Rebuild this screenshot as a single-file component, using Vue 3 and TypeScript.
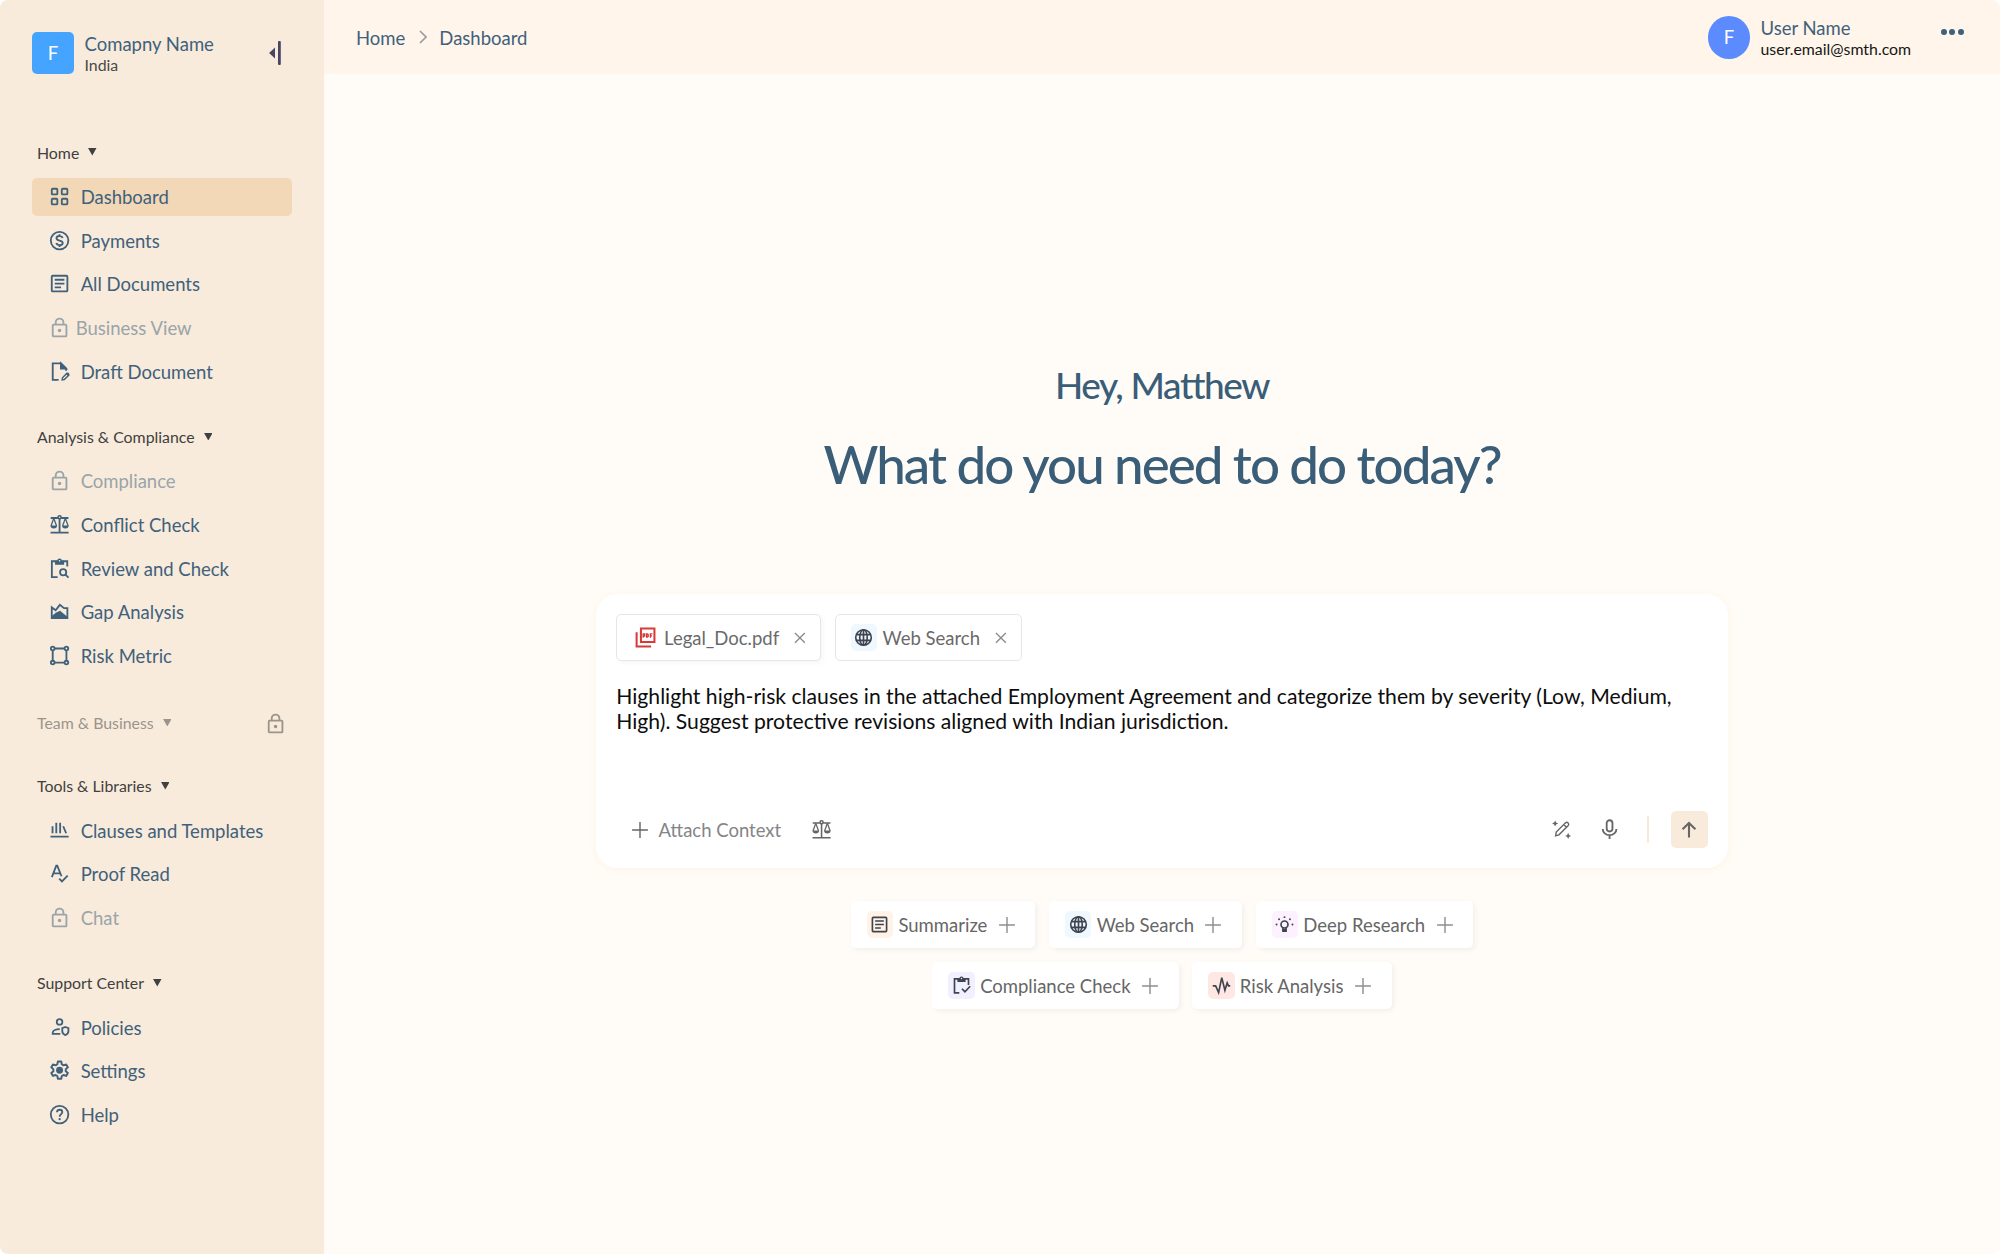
<script setup lang="ts">
interface NavItem {
  label: string
  icon: string
  active?: boolean
  locked?: boolean
  tight?: boolean
}
interface NavSection {
  title: string
  locked?: boolean
  items: NavItem[]
}
interface Suggestion {
  label: string
  icon: string
  tint: string
}

const icons: Record<string, string> = {
  grid: '<rect x="3.9" y="3.9" width="5.8" height="5.8" rx="1"/><rect x="14.3" y="3.9" width="5.8" height="5.8" rx="1"/><rect x="3.9" y="14.3" width="5.8" height="5.8" rx="1"/><rect x="14.3" y="14.3" width="5.8" height="5.8" rx="1"/>',
  dollar: '<circle cx="12" cy="12" r="9.1"/><path d="M15.3 9.3c-.5-1.3-1.7-2-3.3-2-1.9 0-3.2.9-3.2 2.3 0 1.5 1.3 2 3.2 2.4 2 .5 3.3 1 3.3 2.5s-1.4 2.300-3.300 2.300c-1.800 0-3-.8-3.400-2.200M12 5.400v2M12 16.700v2"/>',
  article: '<rect x="3.9" y="3.9" width="16.2" height="16.2" rx="1"/><path d="M7 8h10M7 12h10M7 16h6.500"/>',
  lock: '<rect x="4.9" y="9" width="14.200" height="12.200" rx=".8"/><path d="M8 9V6.700a4 4 0 0 1 8 0V9"/><circle cx="12" cy="15" r="1.800" fill="currentColor" stroke="none"/>',
  draft: '<path d="M11 20.700H4.900V3.500h8.500l5.300 5.300v2.400"/><path d="M13.400 3.500v5.300h5.300z" fill="currentColor"/><path d="m14.700 20.700.3-2.300 4.600-4.600 1.900 1.900-4.600 4.600z" stroke-width="1.500"/><path d="m18.700 14.700 1.900-1.900 1.900 1.900-1.900 1.900z" fill="currentColor" stroke="none"/>',
  scales: '<circle cx="12" cy="4.500" r="1.600" stroke-width="1.600"/><path d="M2.800 5.200h7.500M13.700 5.200h7.500M12 6v14.200M2.600 20.400h18.800"/><path d="m6 5.400-2.900 8M6 5.400l2.900 8M18 5.400l-2.900 8M18 5.400l2.900 8" stroke-width="1.300"/><path d="M2.600 13h6.800a3.400 3.100 0 0 1-6.800 0zM14.600 13h6.800a3.400 3.100 0 0 1-6.800 0z" fill="currentColor" stroke="none"/>',
  review: '<path d="M10 20.900H4V4.400h16v5.400"/><path d="M7.300 4h2.300a2.400 2.400 0 0 1 4.800 0h2.300v4H7.300z" fill="currentColor" stroke="none"/><circle cx="12" cy="4" r=".8" fill="#f8ebdb" stroke="none"/><circle cx="15.700" cy="15.800" r="3.200"/><path d="m18.100 18.200 3.200 3.200"/>',
  gap: '<path d="M3.900 18.700V7.700l4 3 4.400-5.700 4.300 3.400h3.500v10.300z"/><path d="M4 16.500 8.500 13l4-1.800 7.600 6.300v1.200H4z" fill="currentColor" stroke="none"/>',
  metric: '<circle cx="4.900" cy="4.700" r="1.900"/><circle cx="19.100" cy="4.700" r="1.900"/><circle cx="4.900" cy="19.300" r="1.900"/><circle cx="19.100" cy="19.300" r="1.900"/><path d="M6.800 4.700h10.400M6.800 19.300h10.400M4.900 6.600v10.800M19.100 6.600v10.800"/>',
  books: '<path d="M4.700 7.500v7.300M8.600 4v10.800M12.600 4v10.800M15.800 7.500l3 7.300M2.600 18.200h18.800"/>',
  proof: '<path d="M4 15.600 8.600 3.900h1L14 14.800M5.600 11.800h7.200M11.600 17.200l2.900 2.900 5.900-6"/>',
  policy: '<circle cx="12" cy="6.100" r="2.900"/><path d="M12.800 18.600H4.900v-1.300c0-2.500 3.400-3.700 7.300-3.700"/><path d="m18 11.400 3.200 1.200v3c0 2.100-1.300 3.500-3.200 4.200-1.900-.7-3.200-2.100-3.200-4.200v-3z"/>',
  gear: '<path d="M10.300 3h3.400l.5 2.700 1.700 1 2.600-.9 1.700 2.900-2.100 1.800v2l2.100 1.800-1.700 2.900-2.600-.9-1.700 1-.5 2.700h-3.400l-.5-2.700-1.700-1-2.600.9-1.700-2.900 2.100-1.800v-2L3.800 8.700l1.700-2.900 2.600.9 1.700-1z" stroke-linejoin="round" transform="translate(-.6 -.5) scale(1.050)"/><circle cx="12" cy="11.700" r="3.600" fill="currentColor" stroke="none"/>',
  help: '<circle cx="12" cy="12" r="9.100"/><path d="M9.300 9.700c0-1.600 1.200-2.700 2.800-2.700s2.700 1 2.700 2.500c0 2-2.700 2.200-2.700 4.700"/><circle cx="12.100" cy="16.800" r="1.200" fill="currentColor" stroke="none"/>',
  pdf: '<path d="M7.200 2.500h14v14.200h-14zM2.700 6.600v14.700h15" stroke-width="2.100"/><path d="M9.500 12.300V8.100h1.600v2.300H9.500M13.100 8.100v3.500h.8l.8-.7V8.800l-.8-.7zM17 12.300V8.100h2.100M17 10.200h1.700" stroke-width="1.400"/>',
  globe: '<circle cx="12" cy="12" r="8.900"/><ellipse cx="12" cy="12" rx="4.300" ry="8.900"/><path d="M12 3v18M3.600 8.800h16.800M3.600 15.200h16.800"/>',
  bulb: '<circle cx="12" cy="12" r="4"/><path d="M10.200 15.700v3.800h3.600v-3.800M10.200 18h3.600"/><g fill="currentColor" stroke="none"><circle cx="12" cy="3.600" r="1.100"/><circle cx="5.800" cy="5.900" r="1.100"/><circle cx="18.200" cy="5.900" r="1.100"/><circle cx="2.900" cy="12" r="1.100"/><circle cx="21.100" cy="12" r="1.100"/></g>',
  check: '<path d="M9.500 20.500H4V4.500h16v6.800"/><path d="M7.300 4h2.300a2.400 2.400 0 0 1 4.800 0h2.300v4H7.300z" fill="currentColor" stroke="none"/><circle cx="12" cy="4" r=".8" fill="#f2efff" stroke="none"/><path d="m12.500 15.700 3.400 3.400 6-6.200"/>',
  pulse: '<path d="M2 12.500h3.300L8.700 20l3.600-17 3.600 14.500L18.500 9l1.500 3.500h2"/>',
  plus: '<path d="M12 2.500v19M2.500 12h19"/>',
  close: '<path d="m4.500 4.500 15 15M19.500 4.500l-15 15"/>',
  pen: '<path d="m5.300 19.200.7-4.200L16.600 4.400a2.200 2.200 0 0 1 3.100 3.100L9.100 18.100zM14.600 6.400l3.100 3.100"/><path d="M4.700 1.600 5.800 4l2.400 1.100-2.400 1.100-1.100 2.400-1.100-2.400-2.400-1.100L3.600 4zM19.600 15.800l1.100 2.400 2.400 1.100-2.400 1.100-1.100 2.400-1.100-2.400-2.400-1.100 2.400-1.100z" fill="currentColor" stroke="none"/>',
  mic: '<rect x="9" y="2.300" width="6" height="11.700" rx="3"/><path d="M4.900 11.300a7.100 6.500 0 0 0 14.200 0M12 17.800v4"/>',
  up: '<path d="M12 21V3.500M4.300 11.200 12 3.500l7.700 7.700"/>',
}

const sections: NavSection[] = [
  {
    title: 'Home',
    items: [
      { label: 'Dashboard', icon: 'grid', active: true },
      { label: 'Payments', icon: 'dollar' },
      { label: 'All Documents', icon: 'article' },
      { label: 'Business View', icon: 'lock', locked: true, tight: true },
      { label: 'Draft Document', icon: 'draft' },
    ],
  },
  {
    title: 'Analysis & Compliance',
    items: [
      { label: 'Compliance', icon: 'lock', locked: true },
      { label: 'Conflict Check', icon: 'scales' },
      { label: 'Review and Check', icon: 'review' },
      { label: 'Gap Analysis', icon: 'gap' },
      { label: 'Risk Metric', icon: 'metric' },
    ],
  },
  { title: 'Team & Business', locked: true, items: [] },
  {
    title: 'Tools & Libraries',
    items: [
      { label: 'Clauses and Templates', icon: 'books' },
      { label: 'Proof Read', icon: 'proof' },
      { label: 'Chat', icon: 'lock', locked: true },
    ],
  },
  {
    title: 'Support Center',
    items: [
      { label: 'Policies', icon: 'policy' },
      { label: 'Settings', icon: 'gear' },
      { label: 'Help', icon: 'help' },
    ],
  },
]

const suggestionRows: Suggestion[][] = [
  [
    { label: 'Summarize', icon: 'article', tint: 'peach' },
    { label: 'Web Search', icon: 'globe', tint: 'sky' },
    { label: 'Deep Research', icon: 'bulb', tint: 'pink' },
  ],
  [
    { label: 'Compliance Check', icon: 'check', tint: 'violet' },
    { label: 'Risk Analysis', icon: 'pulse', tint: 'coral' },
  ],
]
</script>

<template>
  <div class="app">
    <aside class="sidebar">
      <div class="company">
        <div class="logo">F</div>
        <div class="company-text">
          <div class="company-name">Comapny Name</div>
          <div class="company-place">India</div>
        </div>
        <svg class="collapse" viewBox="0 0 12 24">
          <path d="M6 6.600v10.800L.6 12.600a.8.8 0 0 1 0-1.200z" />
          <rect x="9" y="0" width="2.800" height="24" rx="1" />
        </svg>
      </div>
      <nav>
        <section v-for="s in sections" :key="s.title" class="section" :class="{ 'section-locked': s.locked }">
          <div class="section-title">
            <span>{{ s.title }}</span>
            <svg class="caret" viewBox="0 0 9 8"><path d="M0 0h9L4.500 8z" /></svg>
            <svg v-if="s.locked" class="icon section-lock" viewBox="0 0 24 24" v-html="icons.lock"></svg>
          </div>
          <div v-if="s.items.length" class="items">
            <div
              v-for="i in s.items"
              :key="i.label"
              class="item"
              :class="{ active: i.active, locked: i.locked, tight: i.tight }"
            >
              <svg class="icon" viewBox="0 0 24 24" v-html="icons[i.icon]"></svg>
              <span>{{ i.label }}</span>
            </div>
          </div>
        </section>
      </nav>
    </aside>

    <div class="page">
      <header class="topbar">
        <div class="crumbs">
          <span>Home</span>
          <svg class="chevron" viewBox="0 0 8 14"><path d="m1 1 6 6-6 6" /></svg>
          <span>Dashboard</span>
        </div>
        <div class="user">
          <div class="avatar">F</div>
          <div class="user-text">
            <div class="user-name">User Name</div>
            <div class="user-mail">user.email@smth.com</div>
          </div>
          <div class="dots"><i></i><i></i><i></i></div>
        </div>
      </header>

      <main class="main">
        <h2 class="greeting">Hey, Matthew</h2>
        <h1 class="question">What do you need to do today?</h1>

        <div class="composer">
          <div class="chips">
            <div class="chip chip-file">
              <svg class="icon pdf" viewBox="0 0 24 24" v-html="icons.pdf"></svg>
              <span>Legal_Doc.pdf</span>
              <svg class="icon close" viewBox="0 0 24 24" v-html="icons.close"></svg>
            </div>
            <div class="chip chip-web">
              <div class="tile sky"><svg class="icon" viewBox="0 0 24 24" v-html="icons.globe"></svg></div>
              <span>Web Search</span>
              <svg class="icon close" viewBox="0 0 24 24" v-html="icons.close"></svg>
            </div>
          </div>
          <p class="prompt">
            Highlight high-risk clauses in the attached Employment Agreement and categorize them by severity (Low, Medium, High). Suggest protective revisions aligned with Indian jurisdiction.
          </p>
          <div class="tools">
            <svg class="icon attach-plus" viewBox="0 0 24 24" v-html="icons.plus"></svg>
            <span class="attach">Attach Context</span>
            <svg class="icon law" viewBox="0 0 24 24" v-html="icons.scales"></svg>
            <div class="tools-right">
              <svg class="icon pen" viewBox="0 0 24 24" v-html="icons.pen"></svg>
              <svg class="icon mic" viewBox="0 0 24 24" v-html="icons.mic"></svg>
              <span class="divider"></span>
              <div class="send"><svg class="icon" viewBox="0 0 24 24" v-html="icons.up"></svg></div>
            </div>
          </div>
        </div>

        <div class="suggestions">
          <div v-for="(row, r) in suggestionRows" :key="r" class="suggestion-row">
            <div v-for="p in row" :key="p.label" class="suggestion">
              <div class="tile" :class="p.tint">
                <svg class="icon" viewBox="0 0 24 24" v-html="icons[p.icon]"></svg>
              </div>
              <span>{{ p.label }}</span>
              <svg class="icon add" viewBox="0 0 24 24" v-html="icons.plus"></svg>
            </div>
          </div>
        </div>
      </main>
    </div>
  </div>
</template>

<style>
body {
  background: #fff;
}
</style>

<style scoped>
.app {
  display: flex;
  width: 2000px;
  height: 1254px;
  border-radius: 8px;
  overflow: hidden;
  background: #fffcf7;
  font-family: Lato, "Open Sans", sans-serif;
  font-size: 18.5px;
  color: #3f617c;
  box-sizing: border-box;
}
.icon {
  display: block;
  flex: none;
  width: 23.15px;
  height: 23.15px;
  fill: none;
  stroke: currentColor;
  stroke-width: 1.9;
}
.sidebar {
  width: 324px;
  flex: none;
  box-sizing: border-box;
  padding: 32px 32px 0;
  background: #f8ebdb;
}
.company {
  display: flex;
  align-items: center;
  height: 42px;
  padding-right: 11px;
}
.logo {
  width: 42px;
  height: 42px;
  border-radius: 5px;
  background: #45a4ff;
  color: #fff;
  display: flex;
  align-items: center;
  justify-content: center;
}
.company-text {
  margin-left: 10.5px;
  flex: 1;
}
.company-name {
  line-height: 22px;
}
.company-place {
  font-size: 15.87px;
  line-height: 19px;
  color: #484848;
}
.collapse {
  width: 12px;
  height: 24px;
  fill: #474666;
}
nav {
  margin-top: 67px;
  display: flex;
  flex-direction: column;
  gap: 34.6px;
}
.section-title {
  display: flex;
  align-items: center;
  height: 24px;
  padding: 0 5px;
  font-size: 15.87px;
  color: #404040;
}
.section-title span {
  margin-top: -2px;
}
.caret {
  width: 8.6px;
  height: 7.5px;
  margin: -2px 0 0 9px;
  fill: currentColor;
}
.section-locked {
  margin-bottom: 2.5px;
}
.section-locked .section-title {
  height: 28px;
  color: #9b948c;
}
.section-lock {
  margin: -1px 0 0 auto;
}
.items {
  margin-top: 13px;
  display: flex;
  flex-direction: column;
  gap: 5.7px;
}
.item {
  display: flex;
  align-items: center;
  gap: 9.6px;
  height: 38px;
  padding-left: 15.9px;
  border-radius: 5px;
}
.item .icon {
  margin-top: -1px;
}
.item.active {
  background: #f2d8b7;
}
.item.locked {
  color: #9aa4a9;
}
.item.tight {
  gap: 4.7px;
}
.page {
  flex: 1;
  display: flex;
  flex-direction: column;
}
.topbar {
  height: 74px;
  box-sizing: border-box;
  padding: 16px 36.5px 0 32px;
  display: flex;
  justify-content: space-between;
  background: #fff5eb;
}
.crumbs {
  display: flex;
  align-items: center;
  height: 43px;
}
.chevron {
  width: 8px;
  height: 14px;
  margin: -1px 12.5px 0 13.5px;
  fill: none;
  stroke: #9a9a9a;
  stroke-width: 1.6;
}
.user {
  display: flex;
  height: 43px;
}
.avatar {
  width: 42.5px;
  height: 42.5px;
  border-radius: 50%;
  background: #5b8bff;
  color: #fff;
  display: flex;
  align-items: center;
  justify-content: center;
}
.user-text {
  margin-left: 10.3px;
}
.user-name {
  line-height: 24px;
}
.user-mail {
  margin-top: -1px;
  font-size: 15.87px;
  line-height: 19px;
  color: #161616;
}
.dots {
  display: flex;
  gap: 2.5px;
  margin: 13px 0 0 30px;
}
.dots i {
  width: 5.8px;
  height: 5.8px;
  border-radius: 50%;
  background: #3f617c;
}
.main {
  display: flex;
  flex-direction: column;
  align-items: center;
  color: #3a5d78;
}
.greeting,
.question {
  margin: 0;
  font-weight: 500;
  font-feature-settings: "liga" 1;
  white-space: nowrap;
}
.greeting {
  margin-top: 289px;
  font-size: 37px;
  line-height: 44px;
  letter-spacing: -1.38px;
}
.question {
  margin-top: 25px;
  font-size: 52.9px;
  line-height: 64px;
  letter-spacing: -1.98px;
}
.composer {
  width: 1131.5px;
  height: 274px;
  margin-top: 98px;
  box-sizing: border-box;
  padding: 20px;
  border-radius: 21px;
  background: #fff;
  box-shadow: 0 1px 8px rgba(248, 225, 195, .35);
  display: flex;
  flex-direction: column;
}
.chips {
  display: flex;
  gap: 14.3px;
  color: #6a6a6a;
}
.chip {
  display: flex;
  align-items: center;
  box-sizing: border-box;
  height: 47px;
  border: 1.3px solid #e6e6e6;
  border-radius: 5px;
}
.chip-file {
  width: 204.5px;
  padding: 0 12px 0 16.7px;
  box-shadow: 2px 2px 5px rgba(0, 0, 0, .04);
}
.chip-web {
  width: 187px;
  padding: 0 12px 0 14.5px;
}
.chip .pdf {
  color: #d83a3a;
  margin-right: 7px;
}
.chip .tile {
  margin-right: 5.5px;
}
.chip .close {
  width: 15.8px;
  height: 15.8px;
  margin-left: auto;
  color: #8a8a8a;
  stroke-width: 2;
}
.tile {
  display: flex;
  align-items: center;
  justify-content: center;
  flex: none;
  width: 26.5px;
  height: 26.5px;
  border-radius: 5px;
  color: #3f4450;
}
.tile .icon {
  width: 21px;
  height: 21px;
}
.peach { background: #fff3e7; }
.sky { background: #f0f8ff; }
.pink { background: #fdf0ff; }
.violet { background: #f2efff; }
.coral { background: #ffe8e3; }
.prompt {
  margin: 23px 0 0;
  font-size: 21.16px;
  line-height: 25.4px;
  color: #0d0d0d;
}
.tools {
  display: flex;
  align-items: center;
  height: 37px;
  margin-top: auto;
  color: #666;
}
.attach-plus {
  width: 20px;
  height: 20px;
  margin-left: 13.5px;
  stroke-width: 1.7;
}
.attach {
  margin-left: 8.8px;
  color: #858585;
}
.law {
  margin-left: 29px;
  stroke-width: 1.6;
}
.tools-right {
  margin-left: auto;
  display: flex;
  align-items: center;
}
.pen {
  width: 21px;
  height: 21px;
  stroke-width: 1.6;
}
.mic {
  margin-left: 25.4px;
}
.divider {
  width: 1.3px;
  height: 27px;
  margin: 0 22px 0 26.5px;
  background: #f8e8d4;
}
.send {
  width: 37px;
  height: 37px;
  border-radius: 5px;
  background: #f8ebdb;
  display: flex;
  align-items: center;
  justify-content: center;
}
.send .icon {
  width: 20px;
  height: 20px;
  stroke-width: 2.5;
}
.suggestions {
  margin-top: 33px;
  display: flex;
  flex-direction: column;
  align-items: center;
  gap: 14px;
  color: #666;
}
.suggestion-row {
  display: flex;
  gap: 13.5px;
}
.suggestion {
  display: flex;
  align-items: center;
  box-sizing: border-box;
  height: 47px;
  padding: 0 18.7px 0 15.9px;
  border-radius: 5px;
  background: #fff;
  box-shadow: 2px 2px 5px rgba(0, 0, 0, .05);
}
.suggestion span {
  margin-left: 5.3px;
}
.add {
  width: 20px;
  height: 20px;
  margin-left: 9.4px;
  color: #8e8e8e;
  stroke-width: 1.7;
}
</style>
